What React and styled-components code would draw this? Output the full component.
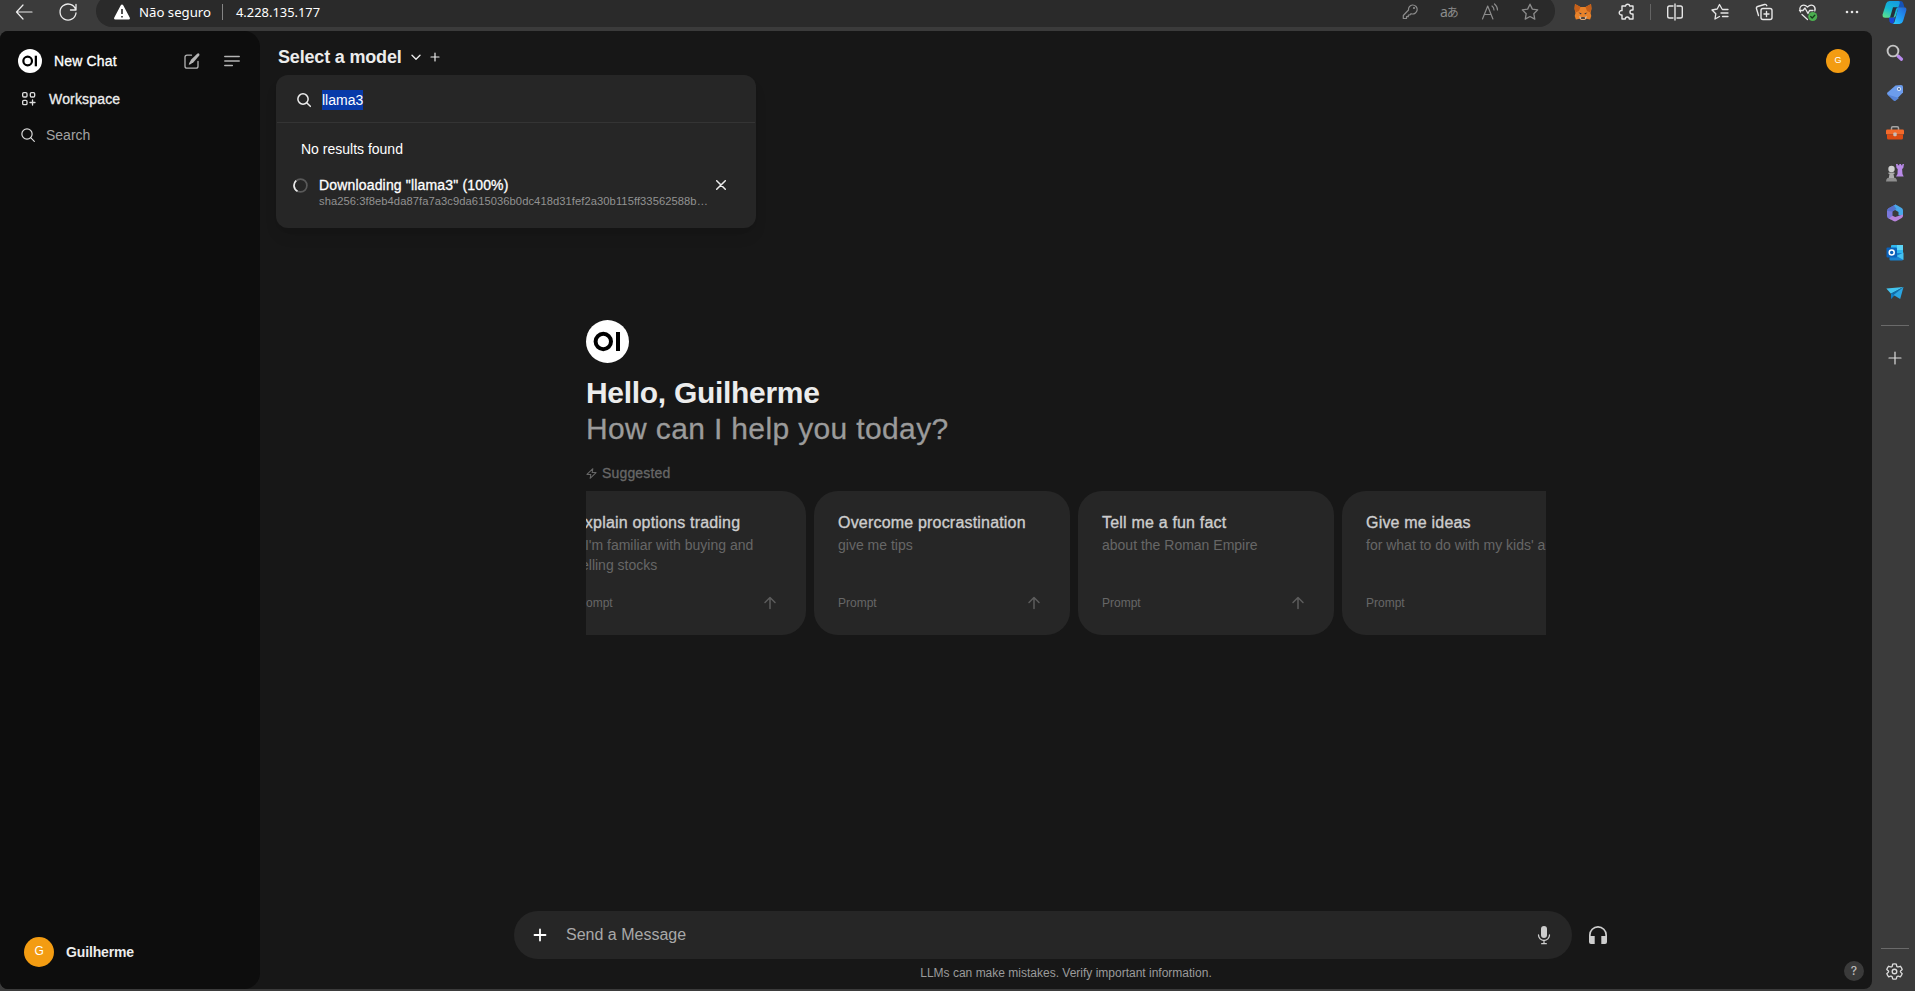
import React from "react";
import styled, { createGlobalStyle, css } from "styled-components";

const Global = createGlobalStyle`
  * { box-sizing: border-box; }
  html, body { margin: 0; padding: 0; }
  body {
    width: 1915px;
    height: 991px;
    overflow: hidden;
    background: #3b3b3b;
    font-family: "Liberation Sans", Arial, sans-serif;
    color: #ececec;
  }
  svg { display: block; flex: none; }
`;

/* Liberation Sans has only two weights; these give the steps in between. */
const medium = css`
  font-weight: 400;
  letter-spacing: 0.012em;
  -webkit-text-stroke: 0.022em currentColor;
`;

const semibold = css`
  font-weight: 700;
  letter-spacing: -0.01em;
`;

/* ---------- browser frame ---------- */

const Browser = styled.div`
  width: 1915px;
  height: 991px;
  display: flex;
  flex-direction: column;
  background: #3b3b3b;
`;

const Toolbar = styled.header`
  height: 31px;
  flex: none;
  display: flex;
  overflow: hidden;
`;

const NavButtons = styled.div`
  width: 96px;
  height: 24px;
  padding-left: 14px;
  flex: none;
  display: flex;
  align-items: center;
  gap: 24px;
`;

const AddressBar = styled.div`
  width: 1459px;
  height: 32px;
  flex: none;
  margin-top: -5px;
  padding: 2px 15px 0 18px;
  border-radius: 16px;
  background: #2a2a2a;
  display: flex;
  align-items: center;
  font-family: "Noto Sans", "Open Sans", sans-serif;
  color: #fff;
`;

const Security = styled.span`
  width: 83px;
  margin-left: 9px;
  font-size: 13.2px;
`;

const AddressDivider = styled.span`
  width: 1px;
  height: 16px;
  margin-right: 13px;
  background: #858585;
`;

const Url = styled.span`
  flex: 1;
  font-size: 12.9px;
`;

const AddressActions = styled.div`
  display: flex;
  gap: 20px;
  color: #8c8c8c;
`;

const Translate = styled.span`
  width: 20px;
  height: 20px;
  font: 14px/19px "Noto Sans", "Noto Sans CJK JP", sans-serif;
  letter-spacing: -1px;
  white-space: nowrap;
  small { font-size: 12px; }
`;

const Extensions = styled.div`
  height: 24px;
  flex: none;
  display: flex;
  align-items: center;
  padding-left: 6px;
  color: #e6e6e6;
`;

const ToolSlot = styled.div`
  width: ${(p) => p.$w || 44}px;
  display: flex;
  justify-content: center;
`;

const ToolDivider = styled.span`
  width: 1px;
  height: 16px;
  margin: 0 1px;
  background: #646464;
`;

const Viewport = styled.div`
  flex: 1;
  min-height: 0;
  display: flex;
  padding-bottom: 2px;
`;

const Page = styled.div`
  width: 1872px;
  display: flex;
  border-radius: 8px;
  overflow: hidden;
  background: #171717;
`;

const Rail = styled.aside`
  width: 43px;
  padding: 2px 0 8px 2px;
  display: flex;
  flex-direction: column;
  align-items: center;
  color: #dcdcdc;
`;

const RailSlot = styled.div`
  height: ${(p) => p.$h || 40}px;
  display: flex;
  align-items: center;
`;

const RailDivider = styled.span`
  width: 28px;
  height: 1px;
  background: #6a6a6a;
  margin: ${(p) => p.$margin};
`;

/* ---------- app sidebar ---------- */

const Sidebar = styled.nav`
  width: 260px;
  padding-top: 10px;
  background: #0d0d0d;
  border-radius: 0 16px 16px 0;
  display: flex;
  flex-direction: column;
`;

const NewChatRow = styled.div`
  height: 40px;
  padding: 0 20px 0 18px;
  display: flex;
  align-items: center;
  font-size: 14px;
  color: #fff;
`;

const NewChatLabel = styled.span`
  flex: 1;
  margin-left: 12px;
  ${medium}
`;

const RowIcons = styled.div`
  display: flex;
  gap: 24px;
  color: #b4b4b4;
`;

const SideItem = styled.div`
  height: 36px;
  padding-left: ${(p) => p.$pad || 21}px;
  display: flex;
  align-items: center;
  gap: ${(p) => p.$gap}px;
  font-size: 14px;
  color: ${(p) => (p.$muted ? "#a3a3a3" : "#ececec")};
  ${(p) => !p.$muted && medium}
  svg { color: #dcdcdc; }
`;

const Spacer = styled.div`
  flex: 1;
`;

const UserRow = styled.div`
  height: 30px;
  margin: 0 0 22px 24px;
  display: flex;
  align-items: center;
  gap: 12px;
  font-size: 14px;
  ${semibold}
`;

const Avatar = styled.div`
  width: ${(p) => p.$size}px;
  height: ${(p) => p.$size}px;
  border-radius: 50%;
  background: #f39c12;
  color: #fff;
  display: flex;
  align-items: center;
  justify-content: center;
  font-size: ${(p) => p.$font}px;
  font-weight: 400;
  padding-bottom: 2px;
`;

/* ---------- main area ---------- */

const Main = styled.main`
  flex: 1;
  display: flex;
  flex-direction: column;
  position: relative;
`;

const Header = styled.div`
  height: 52px;
  padding: 0 22px 0 18px;
  display: flex;
  justify-content: space-between;
`;

const ModelPicker = styled.div`
  display: flex;
  align-items: center;
  height: 52px;
  font-size: 18px;
  ${semibold}
  svg + svg { margin-left: 8px; }
`;

const ModelName = styled.span`
  width: 132px;
`;

const HeaderUser = styled.div`
  padding-top: 18px;
`;

const Menu = styled.div`
  position: absolute;
  left: 16px;
  top: 44px;
  width: 480px;
  height: 153px;
  border-radius: 12px;
  background: #262626;
  box-shadow: 0 10px 15px -3px rgba(0, 0, 0, 0.1), 0 4px 6px -4px rgba(0, 0, 0, 0.1);
  font-size: 14px;
`;

const MenuSearch = styled.div`
  height: 48px;
  margin: 0 1px;
  padding: 2px 0 0 19px;
  display: flex;
  align-items: center;
  gap: 10px;
  border-bottom: 1px solid #343434;
`;

const Selected = styled.span`
  height: 20px;
  line-height: 20px;
  background: #083aa9;
  color: #fff;
`;

const NoResults = styled.div`
  height: 20px;
  line-height: 20px;
  margin: 16px 0 0 25px;
  color: #fff;
`;

const Download = styled.div`
  margin: 16px 0 0 17px;
  display: flex;
  align-items: flex-start;
`;

const DownloadText = styled.div`
  width: 390px;
  margin-left: 11px;
  color: #fff;
  line-height: 20px;
  white-space: nowrap;
`;

const DownloadTitle = styled.div`
  ${medium}
`;

const Digest = styled.div`
  font-size: 11.2px;
  line-height: 14px;
  margin-top: -1px;
  letter-spacing: 0.065px;
  color: #929292;
`;

const DownloadIcon = styled.div`
  margin-top: ${(p) => p.$top}px;
  margin-left: ${(p) => p.$left || 0}px;
`;

const Welcome = styled.section`
  width: 960px;
  margin: 237px 0 0 326px;
`;

const Greeting = styled.h1`
  margin: 12px 0 0;
  font-size: 30px;
  line-height: 36px;
  ${semibold}
`;

const Question = styled.div`
  font-size: 30px;
  line-height: 36px;
  color: #9b9b9b;
  ${medium}
  -webkit-text-stroke-width: 0.3px;
`;

const Suggested = styled.div`
  height: 20px;
  margin-top: 16px;
  display: flex;
  align-items: center;
  gap: 5px;
  font-size: 14px;
  color: #676767;
  ${medium}
`;

const Cards = styled.div`
  height: 144px;
  margin-top: 8px;
  overflow: hidden;
  display: flex;
  gap: 8px;
`;

const Card = styled.article`
  width: 256px;
  height: 144px;
  flex: none;
  padding: 20px 24px;
  border-radius: 24px;
  background: #262626;
  display: flex;
  flex-direction: column;
  &:first-child { margin-left: -36px; }
`;

const CardTitle = styled.div`
  font-size: 16px;
  line-height: 24px;
  color: #cdcdcd;
  white-space: nowrap;
  ${medium}
`;

const CardText = styled.div`
  flex: 1;
  font-size: 14px;
  line-height: 20px;
  color: #676767;
  white-space: pre;
`;

const CardFoot = styled.div`
  height: 24px;
  display: flex;
  align-items: center;
  justify-content: space-between;
  font-size: 12px;
  color: #676767;
  padding-right: 4px;
`;

const ComposerRow = styled.div`
  height: 48px;
  margin: auto 0 0 254px;
  display: flex;
  align-items: center;
  color: #cdcdcd;
`;

const Composer = styled.div`
  width: 1058px;
  height: 48px;
  margin-right: 16px;
  padding: 0 18px 0 16px;
  border-radius: 24px;
  background: #262626;
  display: flex;
  align-items: center;
`;

const Placeholder = styled.span`
  flex: 1;
  margin-left: 16px;
  font-size: 16px;
  color: #a9a9a9;
`;

const Footer = styled.footer`
  height: 30px;
  padding: 2px 8px 0 0;
  display: flex;
  justify-content: flex-end;
  font-size: 12px;
  color: #9b9b9b;
`;

const Disclaimer = styled.span`
  width: 960px;
  text-align: center;
  margin: 5px 298px 0 0;
`;

const Help = styled.span`
  width: 20px;
  height: 20px;
  border-radius: 50%;
  background: #3a3a3a;
  color: #b9b9b9;
  font: 500 12px/20px Inter, sans-serif;
  text-align: center;
`;

/* ---------- icons ---------- */

const Icon = ({ size = 20, box = 20, w = 1.2, children }) => (
  <svg
    width={size}
    height={size}
    viewBox={`0 0 ${box} ${box}`}
    fill="none"
    stroke="currentColor"
    strokeWidth={w}
    strokeLinecap="round"
    strokeLinejoin="round"
  >
    {children}
  </svg>
);

const Logo = ({ size }) => (
  <svg width={size} height={size} viewBox="0 0 43 43">
    <circle cx="21.5" cy="21.5" r="21.5" fill="#fff" />
    <circle cx="17.3" cy="21.5" r="7.7" fill="none" stroke="#000" strokeWidth="4" />
    <rect x="30" y="12" width="4" height="19" fill="#000" />
  </svg>
);

const STAR = "M10 2.2l2.35 4.95 5.35.75-3.9 3.8.95 5.4L10 14.55 5.25 17.1l.95-5.4-3.9-3.8 5.35-.75z";

const SearchIcon = ({ size = 16, w = 1.5 }) => (
  <Icon size={size} box={24} w={w * (24 / size)}>
    <circle cx="10.5" cy="10.5" r="7.7" />
    <path d="M16 16l5.5 5.5" />
  </Icon>
);

const PlusIcon = ({ size, w }) => (
  <Icon size={size} box={size} w={w}>
    <path d={`M${size / 2} 1v${size - 2}M1 ${size / 2}h${size - 2}`} />
  </Icon>
);

const Fox = () => (
  <svg width="18" height="18" viewBox="0 0 18 18">
    <path d="M1 1l5.5 3h5L17 1l.5 5-1 4 .8 3-1.2 3.5-3.5-.8L10.5 17h-3l-2.1-1.3-3.5.8L.7 13l.8-3-1-4z" fill="#e8822a" />
    <path d="M1 1l5.5 3L5 8 1.5 9.5.6 5zM17 1l-5.5 3L13 8l3.5 1.5.9-4.5z" fill="#c65f18" />
    <path d="M4.5 9.5l3 .7-.5 1.2zM13.5 9.5l-3 .7.5 1.2z" fill="#25334a" />
    <path d="M5 13l2.2 1h3.6L13 13l-1 3-1.5.8h-3L6 16z" fill="#d3b79d" />
    <path d="M7.3 14.2h3.4l.3 1.5H7z" fill="#271f1a" />
  </svg>
);

const Copilot = () => (
  <svg width="25" height="25" viewBox="0 0 25 25">
    <defs>
      <linearGradient id="cpA" x1="0.7" y1="0" x2="0.2" y2="1">
        <stop offset="0" stopColor="#159be0" />
        <stop offset="0.5" stopColor="#14b8d4" />
        <stop offset="1" stopColor="#5be08c" />
      </linearGradient>
      <linearGradient id="cpB" x1="1" y1="0" x2="0.2" y2="1">
        <stop offset="0" stopColor="#2462d8" />
        <stop offset="0.6" stopColor="#1f9cf5" />
        <stop offset="1" stopColor="#28c7fb" />
      </linearGradient>
    </defs>
    <path d="M15 1h3.5q2 0 2.7 2l1.2 4h-5.500z" fill="#1552b8" />
    <path d="M7.5 1h8.8q2 0 1.5 2L14 15.5q-.7 2.200-3 2.200H3.200Q0 17.700.7 14.200L4 3.700Q5 1 7.500 1z" fill="url(#cpA)" />
    <path d="M7 17.500h6l-1.500 6H10q-2 0-2.500-2z" fill="#1746d8" />
    <path d="M14.500 7.300h7.300q3.200 0 2.500 3.200l-3.300 10.700Q20 24 17.500 24h-7q1.500-.5 2-2l3.300-12q.4-1.700-1.300-2.700z" fill="url(#cpB)" />
    <path d="M11 7.300h5q-1.500.5-2 2l-2 7q-.3 1-1 1.200H8z" fill="#252f3a" />
  </svg>
);

const RailSearch = () => (
  <svg width="18" height="18" viewBox="0 0 18 18" fill="none" strokeLinecap="round">
    <path d="M12 12l3.500 3.200" stroke="#b98aee" strokeWidth="3.2" />
    <circle cx="7" cy="7" r="5.4" stroke="#c4c4c4" strokeWidth="1.9" />
  </svg>
);

const Tag = () => (
  <svg width="18" height="18" viewBox="0 0 18 18">
    <path d="M9.500 1.500L15 1q2 0 2 2v5.500l-7.500 7.700q-1 .9-2 0l-6-5.700q-1-1 0-2z" fill="#6c9cec" />
    <path d="M1.500 10.500L13 14l-3.500 2.700q-1 .5-2-.4z" fill="#5784d8" />
    <circle cx="13" cy="5" r="2" fill="#dce8fa" />
    <circle cx="13" cy="5" r=".9" fill="#344b77" />
  </svg>
);

const Toolbox = () => (
  <svg width="18" height="18" viewBox="0 0 18 18">
    <path d="M5.500 6V4q0-1.300 1.300-1.300h4.400q1.300 0 1.300 1.300v2" fill="none" stroke="#a5a5a5" strokeWidth="1.5" />
    <rect y="5.5" width="18" height="5" rx="1.2" fill="#f36a2b" />
    <path d="M1 10.500h16V14q0 1.500-1.500 1.500h-13Q1 15.500 1 14z" fill="#dc4b12" />
    <rect x="7.3" y="8.5" width="3.4" height="3.8" rx="1" fill="#c9bdb8" />
  </svg>
);

const Chess = () => (
  <svg width="18" height="18" viewBox="0 0 18 18">
    <path d="M10 0h1.800v1.300h1.500V0h1.800v1.300h1.300V0H18l-.7 4-1.200 1 .4 5 1.200 2.500H10L11.500 10l.2-5L10.500 4z" fill="#b98ae8" />
    <circle cx="5.5" cy="5" r="3.2" fill="#cfcfcf" />
    <path d="M2.500 8.500h6V10h-1l.8 4H2.700l.8-4h-1z" fill="#ababab" />
    <path d="M1.500 14h8q1.500 1 1.500 3.500H0Q0 15 1.500 14z" fill="#8e8e8e" />
  </svg>
);

const M365 = () => (
  <svg width="18" height="18" viewBox="0 0 18 18">
    <path d="M10 .3L2.500 4.300Q1 5.200 1 7v5q0 1.700 1.500 2.500l2.500 1 1.500-3.500V7.500L10.500 5z" fill="#7b78dc" />
    <path d="M8 1.200q1.500-1 3 0l4.700 2.900q1.300.8 1.300 2.500v5.200l-4.500-.6V8L7.500 5z" fill="#48a9ea" />
    <path d="M17 10.500v1.300q0 1.500-1.300 2.300L10.500 17q-1.500.9-3 0L3 14.500l3.500-2.800 2.700 1.300z" fill="#b884dc" />
    <path d="M8 1.200L2.500 4.300Q1 5.200 1 7l5.500.5L10.500 5z" fill="#4d6cc6" opacity=".75" />
  </svg>
);

const Outlook = () => (
  <svg width="18" height="18" viewBox="0 0 18 18">
    <rect x="5" y="1" width="12" height="9" rx="1" fill="#30b8ef" />
    <rect x="11" y="1" width="6" height="5" fill="#5cd5f8" />
    <path d="M3.500 9H17v6.500q0 1-1 1H4.500q-1 0-1-1z" fill="#1681d0" />
    <path d="M17.500 8.500V16l-7-4z" fill="#43c2f2" />
    <rect x=".5" y="3.500" width="10.5" height="10" rx="1" fill="#0a62bb" />
    <circle cx="5.7" cy="8.5" r="2.5" fill="none" stroke="#fff" strokeWidth="1.5" />
  </svg>
);

const Plane = () => (
  <svg width="18" height="18" viewBox="0 0 18 18">
    <path d="M.3 4.500L17.500 3 5 9.700z" fill="#42c4ef" />
    <path d="M17.500 3L5 9.500V15z" fill="#0e6cab" />
    <path d="M17.500 3l-3.300 12L7.500 11z" fill="#2aa5e2" />
    <path d="M5 9.500V15l3-3.700z" fill="#1480c5" />
  </svg>
);

const Gear = () => (
  <Icon size={19} box={24} w={1.7}>
    <circle cx="12" cy="12" r="2.9" />
    <path d="M9.700 2.700q2.300-.6 4.600 0l.6 2.700q.7 1 1.900.8l2.600-.8q1.700 1.800 2.300 4l-2 1.900q-.6.9 0 1.500l2 1.900q-.6 2.200-2.300 4l-2.600-.8q-1.200-.2-1.900.8l-.6 2.600q-2.300.6-4.600 0l-.6-2.600q-.7-1-1.900-.8l-2.600.8q-1.700-1.800-2.300-4l2-1.900q.6-.8 0-1.500l-2-1.900q.6-2.200 2.300-4l2.600.8q1.200.2 1.900-.8z" />
  </Icon>
);

/* ---------- content ---------- */

const suggestions = [
  { title: "Explain options trading", text: "if I'm familiar with buying and\nselling stocks" },
  { title: "Overcome procrastination", text: "give me tips" },
  { title: "Tell me a fun fact", text: "about the Roman Empire" },
  { title: "Give me ideas", text: "for what to do with my kids' art" },
];

function BrowserToolbar() {
  return (
    <Toolbar>
      <NavButtons>
        <Icon><path d="M18 10H2.500M9 3L2.500 10 9 17" /></Icon>
        <Icon w={1.3}><path d="M17.700 7.700A8 8 0 1 0 18 11M18 2.500v5.500h-5.500" /></Icon>
      </NavButtons>
      <AddressBar>
        <svg width="16" height="16" viewBox="0 0 16 16">
          <path d="M8 .5q.8 0 1.200.8l6.500 12.200q.8 2-1 2H1.300q-1.800 0-1-2L6.800 1.300Q7.200.5 8 .5z" fill="#fff" />
          <path d="M8 5v5M8 12v1.500" stroke="#2a2a2a" strokeWidth="1.6" />
        </svg>
        <Security>Não seguro</Security>
        <AddressDivider />
        <Url>4.228.135.177</Url>
        <AddressActions>
          <Icon>
            <path d="M12.500 3a4.500 4.500 0 1 1-1.400 8.700L9.800 13H8.300v1.700H6.500v1.800H3.300v-3L8.500 8A4.500 4.500 0 0 1 12.500 3z" />
            <circle cx="14" cy="6" r=".5" />
          </Icon>
          <Translate>a<small>あ</small></Translate>
          <Icon><path d="M2.500 17L7.700 4l5.200 13M4.200 12.500h7M12 4q2 1.500 2 4M14.500 2q3 2.500 3 6" /></Icon>
          <Icon w={1.3}><path d={STAR} /></Icon>
        </AddressActions>
      </AddressBar>
      <Extensions>
        <ToolSlot><Fox /></ToolSlot>
        <ToolSlot>
          <Icon w={1.4}><path d="M5 4h3.500a2.200 2.200 0 0 1 4.300 0H16v4h-1a2 2 0 0 0 0 4h1v5h-3.700a2 2 0 0 0-4 0H5v-4a2.300 2.300 0 1 1 0-4.500z" /></Icon>
        </ToolSlot>
        <ToolDivider />
        <ToolSlot $w={46}>
          <Icon w={1.4}><path d="M8 4H4.500Q2.700 4 2.700 5.800v8.400Q2.700 16 4.500 16H8M12 4h3.500q1.800 0 1.800 1.800v8.400q0 1.800-1.800 1.800H12M10 2v16" /></Icon>
        </ToolSlot>
        <ToolSlot>
          <Icon w={1.3}><path d="M12 7L9.500 2.500 7.200 7 2 8l3.800 3.800L5 17l4.500-2.500M12.500 7.500H18M11 11h7M12.500 14.500H18" /></Icon>
        </ToolSlot>
        <ToolSlot>
          <Icon w={1.4}>
            <rect x="7" y="6.5" width="11" height="11" rx="2" />
            <path d="M4.500 13.500L2.500 6.700q-.5-1.700 1.200-2.200l6.800-2q1.700-.5 2.300 1.200M12.500 9.500v5M10 12h5" />
          </Icon>
        </ToolSlot>
        <ToolSlot>
          <Icon w={1.3}>
            <path d="M2.500 10Q.8 6 3.500 3.800 6.500 2 9.500 5 12.500 2 15.500 3.800 18 6 16.800 9M4 12.500L9.500 17.500M1.500 8.500H5L7 6l3 5.500 1.500-3H15" />
            <circle cx="14.7" cy="14.5" r="4.5" fill="#4caf50" stroke="none" />
            <path d="M12.700 14.500l1.500 1.500 2.600-2.700" stroke="#173c1b" />
          </Icon>
        </ToolSlot>
        <ToolSlot>
          <svg width="14" height="4" viewBox="0 0 14 4" fill="#e6e6e6">
            <circle cx="2" cy="2" r="1.3" /><circle cx="7" cy="2" r="1.3" /><circle cx="12" cy="2" r="1.3" />
          </svg>
        </ToolSlot>
        <ToolSlot $w={41}><Copilot /></ToolSlot>
      </Extensions>
    </Toolbar>
  );
}

function AppSidebar() {
  return (
    <Sidebar>
      <NewChatRow>
        <Logo size={24} />
        <NewChatLabel>New Chat</NewChatLabel>
        <RowIcons>
          <Icon size={16} box={16} w={1.3}>
            <path d="M7.500 2.200H3Q1 2.200 1 4.200v9q0 2 2 2h9q2 0 2-2V8.500" />
            <path d="M13.200.7q1.200-.7 2 .1.700.8-.1 1.900L9.500 9.300 6 11.500 4.800 11.700 5 10.500 7.200 6.500z" fill="currentColor" stroke="none" />
          </Icon>
          <Icon size={16} box={16} w={1.5}><path d="M.8 3.500h14.400M.8 8h14.400M.8 12.500h7.500" /></Icon>
        </RowIcons>
      </NewChatRow>
      <SideItem $gap={12}>
        <Icon size={16} box={24} w={2}>
          <rect x="2.5" y="2.5" width="6.5" height="6.5" rx="1.8" />
          <rect x="14" y="2.5" width="6.5" height="6.5" rx="1.8" />
          <rect x="2.5" y="14" width="6.5" height="6.5" rx="1.8" />
          <path d="M17.300 13.500v7.500M13.500 17.300H21" />
        </Icon>
        Workspace
      </SideItem>
      <SideItem $gap={10} $pad={20} $muted>
        <SearchIcon w={1.2} />
        Search
      </SideItem>
      <Spacer />
      <UserRow>
        <Avatar $size={30} $font={12}>G</Avatar>
        Guilherme
      </UserRow>
    </Sidebar>
  );
}

function ModelMenu() {
  return (
    <Menu>
      <MenuSearch>
        <SearchIcon w={1.5} />
        <Selected>llama3</Selected>
      </MenuSearch>
      <NoResults>No results found</NoResults>
      <Download>
        <DownloadIcon $top={3}>
          <svg width="15" height="15" viewBox="0 0 15 15" fill="none" strokeWidth="1.7">
            <circle cx="7.5" cy="7.5" r="6.4" stroke="#595959" />
            <path d="M4.500 13.200A6.400 6.400 0 0 1 3.200 2.700" stroke="#e8e8e8" />
          </svg>
        </DownloadIcon>
        <DownloadText>
          <DownloadTitle>Downloading "llama3" (100%)</DownloadTitle>
          <Digest>sha256:3f8eb4da87fa7a3c9da615036b0dc418d31fef2a30b115ff33562588b…</Digest>
        </DownloadText>
        <DownloadIcon $top={5} $left={7}>
          <Icon size={10} box={10} w={1.5}><path d="M.7.700l8.600 8.600M9.300.7L.7 9.300" /></Icon>
        </DownloadIcon>
      </Download>
    </Menu>
  );
}

export default function App() {
  return (
    <Browser>
      <Global />
      <BrowserToolbar />
      <Viewport>
        <Page>
          <AppSidebar />
          <Main>
            <Header>
              <ModelPicker>
                <ModelName>Select a model</ModelName>
                <Icon size={12} box={12} w={1.4}><path d="M2 4.200l4 4 4-4" /></Icon>
                <PlusIcon size={10} w={1.2} />
              </ModelPicker>
              <HeaderUser><Avatar $size={24} $font={9}>G</Avatar></HeaderUser>
            </Header>
            <ModelMenu />
            <Welcome>
              <Logo size={43} />
              <Greeting>Hello, Guilherme</Greeting>
              <Question>How can I help you today?</Question>
              <Suggested>
                <Icon size={11} box={12} w={1.1}><path d="M7.500.8L1 7h4.300L4.500 11.200 11 5H6.700z" /></Icon>
                Suggested
              </Suggested>
              <Cards>
                {suggestions.map((s) => (
                  <Card key={s.title}>
                    <CardTitle>{s.title}</CardTitle>
                    <CardText>{s.text}</CardText>
                    <CardFoot>
                      Prompt
                      <Icon size={16} box={16} w={1.5}><path d="M8 13.500V2.500M3 7.500l5-5 5 5" stroke="#5c5c5c" /></Icon>
                    </CardFoot>
                  </Card>
                ))}
              </Cards>
            </Welcome>
            <ComposerRow>
              <Composer>
                <svg width="20" height="20" viewBox="0 0 20 20">
                  <path d="M10 4.500v11M4.500 10h11" stroke="#fff" strokeWidth="1.8" strokeLinecap="round" />
                </svg>
                <Placeholder>Send a Message</Placeholder>
                <svg width="20" height="20" viewBox="0 0 20 20" fill="none" stroke="currentColor" strokeWidth="1.3" strokeLinecap="round">
                  <rect x="7" y="1" width="6" height="12" rx="3" fill="currentColor" stroke="none" />
                  <path d="M4.500 10a5.500 5.500 0 0 0 11 0M10 15.500v3M7.700 18.700h4.600" />
                </svg>
              </Composer>
              <svg width="20" height="20" viewBox="0 0 20 20" fill="currentColor">
                <path d="M1 10a9 9 0 0 1 18 0v7q0 2-2 2h-3.700v-8h4V10a7.300 7.300 0 0 0-14.600 0v1h4v8H3q-2 0-2-2z" />
              </svg>
            </ComposerRow>
            <Footer>
              <Disclaimer>LLMs can make mistakes. Verify important information.</Disclaimer>
              <Help>?</Help>
            </Footer>
          </Main>
        </Page>
        <Rail>
          <RailSlot><RailSearch /></RailSlot>
          <RailSlot><Tag /></RailSlot>
          <RailSlot><Toolbox /></RailSlot>
          <RailSlot><Chess /></RailSlot>
          <RailSlot><M365 /></RailSlot>
          <RailSlot><Outlook /></RailSlot>
          <RailSlot><Plane /></RailSlot>
          <RailDivider $margin="12px 0" />
          <RailSlot><PlusIcon size={14} w={1.2} /></RailSlot>
          <Spacer />
          <RailDivider $margin="0 0 12px" />
          <RailSlot $h={20}><Gear /></RailSlot>
        </Rail>
      </Viewport>
    </Browser>
  );
}
